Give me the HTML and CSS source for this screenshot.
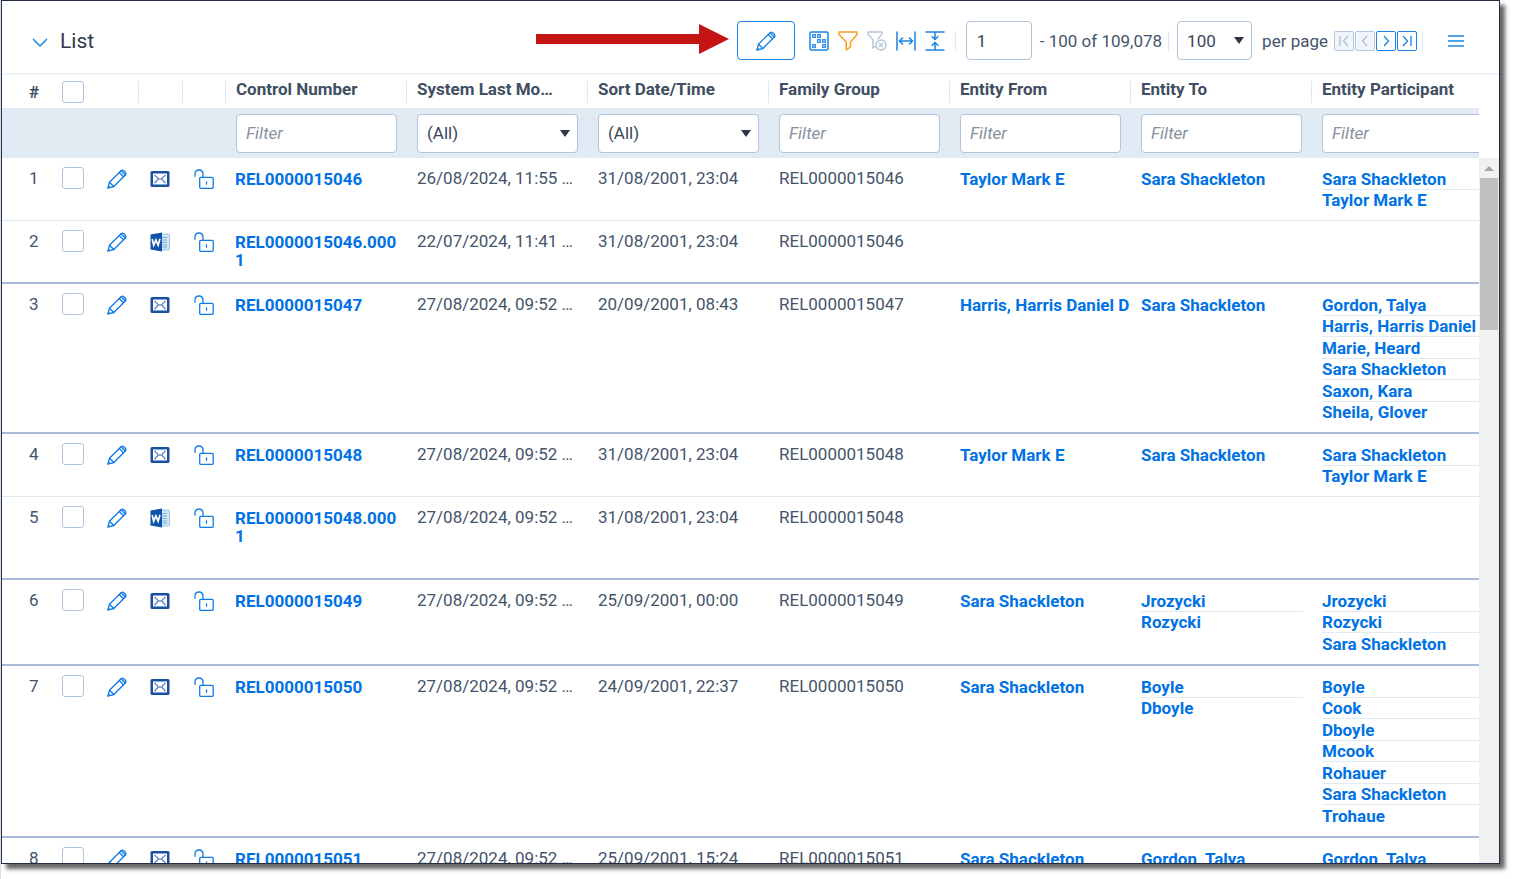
FILE: index.html
```html
<!DOCTYPE html>
<html lang="en">
<head>
  <meta charset="UTF-8" />
  <meta name="viewport" content="width=device-width, initial-scale=1.0"/>
  <title>List</title>
  <link rel="stylesheet" href="styles.css">
</head>
<body>

  <!-- icon sprite -->
  <svg class="sprite" aria-hidden="true">
    <symbol id="i-pencil" viewBox="0 0 20 20">
      <g fill="none" stroke="currentColor" stroke-width="1.3" stroke-linejoin="round" stroke-linecap="round">
        <path d="M.8 19.2 2.5 13.2 14 1.700q1.400-1.200 2.800 0l1.500 1.500q1.200 1.400 0 2.800L6.800 17.500Z"/>
        <path d="M2.500 13.200 6.800 17.500M12.200 3.500l4.300 4.300M14 1.700l4.300 4.300"/>
      </g>
      <path d="M.8 19.200 1.600 16.400 3.600 18.400Z" fill="currentColor"/>
    </symbol>
    <symbol id="i-mail" viewBox="0 0 20 20">
      <rect x=".5" y="2" width="19" height="16" rx="1.5" fill="#1c4f9f"/>
      <rect x="3" y="4.500" width="14" height="11" fill="#fff"/>
      <path d="M4.500 6 9 10.200h2L15.500 6M4.500 14.300l3.500-4M15.500 14.300l-3.500-4" fill="none" stroke="#5f86c1" stroke-width="1.3"/>
    </symbol>
    <symbol id="i-word" viewBox="0 0 20 20">
      <path d="M10 2h8.5q1 0 1 1v14q0 1-1 1H10Z" fill="#d3e5f6" stroke="#9fc3e6" stroke-width="1"/>
      <path d="M12.5 5.5H17M12.5 8H17M12.5 10.500H17M12.500 13H17M12.500 15H17" stroke="#7fb0de" stroke-width="1"/>
      <path d="M.5 2.500 12 .5v19L.5 17.500Z" fill="#0c54a8"/>
      <path d="m2.200 7 1.500 6.300L5.900 8l2.200 5.300L10 6.800" fill="none" stroke="#fff" stroke-width="1.700"/>
    </symbol>
    <symbol id="i-unlock" viewBox="0 0 20 20">
      <g fill="none" stroke="currentColor" stroke-width="1.300" stroke-linecap="round">
        <rect x="5.700" y="8.300" width="13.500" height="11" rx="1"/>
        <path d="M1 7.300V5Q1.200 1 5 1t4 4v3.300M12.500 12.800v2.400"/>
      </g>
    </symbol>
  </svg>

  <main class="panel">
    <header class="toolbar">
      <button class="icon-btn collapse" aria-label="Collapse list">
        <svg viewBox="0 0 16 10"><path d="m1 1 7 7 7-7" fill="none" stroke="currentColor" stroke-width="1.500"/></svg>
      </button>
      <h1 class="title">List</h1>

      <svg class="pointer" viewBox="0 0 193 30" aria-hidden="true"><path d="M0 10h163V0l30 15-30 15V20H0Z" fill="#c41414"/></svg>
      <button class="edit-btn" aria-label="Mass edit"><svg class="icon"><use href="#i-pencil"/></svg></button>

      <div class="tools">
        <button class="icon-btn" aria-label="Columns">
          <svg class="icon" viewBox="0 0 20 20" fill="none" stroke="currentColor" stroke-width="1.200">
            <rect x="1" y="1" width="18" height="18" rx="1.500" stroke-width="1.500"/>
            <rect x="3.700" y="3.700" width="2.600" height="2.600"/><rect x="8.700" y="3.700" width="2.600" height="2.600"/>
            <rect x="8.700" y="8.700" width="2.600" height="2.600"/><rect x="13.700" y="8.700" width="2.600" height="2.600"/>
            <rect x="3.700" y="13.700" width="2.600" height="2.600"/><rect x="13.700" y="13.700" width="2.600" height="2.600"/>
          </svg>
        </button>
        <button class="icon-btn filter-on" aria-label="Toggle filters">
          <svg class="icon" viewBox="0 0 20 20"><path d="M1 1h18v2.500L12.500 11v4.800L8.300 19V11L1 3.500Z" fill="none" stroke="currentColor" stroke-width="1.500" stroke-linejoin="round"/></svg>
        </button>
        <button class="icon-btn off" aria-label="Clear filters" disabled>
          <svg class="icon" viewBox="0 0 20 20" fill="none" stroke="currentColor" stroke-width="1.400" stroke-linejoin="round">
            <path d="M8.500 15.300 6 17V9L1 3V1h14v2l-4.600 5.400"/>
            <circle cx="14" cy="14" r="5"/><path d="m12 12 4 4m0-4-4 4"/>
          </svg>
        </button>
        <button class="icon-btn" aria-label="Fit width">
          <svg class="icon" viewBox="0 0 20 20" fill="none" stroke="currentColor" stroke-width="1.500"><path d="M1 .5v19M19 .5v19M3.500 10h13M7 6.500 3.500 10 7 13.500M13 6.500l3.500 3.500-3.500 3.500"/></svg>
        </button>
        <button class="icon-btn" aria-label="Fit height">
          <svg class="icon" viewBox="0 0 20 20" fill="none" stroke="currentColor" stroke-width="1.500"><path d="M.5 1h19M.5 19h19M10 1v7.500M6.700 5.300 10 8.500l3.300-3.200M10 19v-7.500M6.700 14.700 10 11.500l3.300 3.200"/></svg>
        </button>
      </div>

      <span class="sep"></span>
      <input class="field page-no" type="text" value="1" aria-label="First item">
      <span class="range">- 100 of 109,078</span>
      <span class="sep"></span>
      <div class="select page-size">
        <select class="field" id="pageSize"><option>100</option></select>
      </div>
      <label class="per-page" for="pageSize">per page</label>
      <nav class="pager" aria-label="Pages">
        <button aria-label="First page" disabled><svg viewBox="0 0 18 18"><path d="M5 4v10M13 4 8.500 9l4.500 5"/></svg></button>
        <button aria-label="Previous page" disabled><svg viewBox="0 0 18 18"><path d="M11 4 6.500 9l4.500 5"/></svg></button>
        <button aria-label="Next page"><svg viewBox="0 0 18 18"><path d="m7 4 4.500 5L7 14"/></svg></button>
        <button aria-label="Last page"><svg viewBox="0 0 18 18"><path d="m5 4 4.500 5L5 14M13 4v10"/></svg></button>
      </nav>
      <span class="sep"></span>
      <button class="icon-btn menu" aria-label="Menu">
        <svg viewBox="0 0 16 12"><path d="M0 1h16M0 6h16M0 11h16" stroke="currentColor" stroke-width="1.300"/></svg>
      </button>
    </header>

    <div class="list">
      <div class="table-wrap">
        <table>
          <colgroup>
            <col class="c-num"><col class="c-check"><col class="c-edit"><col class="c-type"><col class="c-lock">
            <col><col><col><col><col><col><col>
          </colgroup>
          <thead>
            <tr class="heads">
              <th class="num">#</th>
              <th class="check"><input type="checkbox" aria-label="Select all"></th>
              <th></th>
              <th><div class="head"></div></th>
              <th><div class="head"></div></th>
              <th><div class="head">Control Number</div></th>
              <th><div class="head">System Last Modified On</div></th>
              <th><div class="head">Sort Date/Time</div></th>
              <th><div class="head">Family Group</div></th>
              <th><div class="head">Entity From</div></th>
              <th><div class="head">Entity To</div></th>
              <th><div class="head">Entity Participant</div></th>
            </tr>
            <tr class="filters">
              <td colspan="5"></td>
              <td><input class="field" type="text" placeholder="Filter" aria-label="Control Number"></td>
              <td><div class="select"><select class="field" aria-label="System Last Modified On"><option>(All)</option></select></div></td>
              <td><div class="select"><select class="field" aria-label="Sort Date/Time"><option>(All)</option></select></div></td>
              <td><input class="field" type="text" placeholder="Filter" aria-label="Family Group"></td>
              <td><input class="field" type="text" placeholder="Filter" aria-label="Entity From"></td>
              <td><input class="field" type="text" placeholder="Filter" aria-label="Entity To"></td>
              <td><input class="field" type="text" placeholder="Filter" aria-label="Entity Participant"></td>
            </tr>
          </thead>
          <tbody>
            <tr>
              <td class="num">1</td>
              <td class="check"><input type="checkbox" aria-label="Select 1"></td>
              <td class="ico"><svg class="icon"><use href="#i-pencil"/></svg></td>
              <td class="ico"><svg class="icon"><use href="#i-mail"/></svg></td>
              <td class="ico"><svg class="icon"><use href="#i-unlock"/></svg></td>
              <td class="ctrl"><a href="#">REL0000015046</a></td>
              <td class="txt">26/08/2024, 11:55 AM</td>
              <td class="txt">31/08/2001, 23:04</td>
              <td class="txt">REL0000015046</td>
              <td><ul><li><a href="#">Taylor Mark E</a></li></ul></td>
              <td><ul><li><a href="#">Sara Shackleton</a></li></ul></td>
              <td><ul><li><a href="#">Sara Shackleton</a></li><li><a href="#">Taylor Mark E</a></li></ul></td>
            </tr>
            <tr class="family-end">
              <td class="num">2</td>
              <td class="check"><input type="checkbox" aria-label="Select 2"></td>
              <td class="ico"><svg class="icon"><use href="#i-pencil"/></svg></td>
              <td class="ico"><svg class="icon"><use href="#i-word"/></svg></td>
              <td class="ico"><svg class="icon"><use href="#i-unlock"/></svg></td>
              <td class="ctrl"><a href="#">REL0000015046.0001</a></td>
              <td class="txt">22/07/2024, 11:41 AM</td>
              <td class="txt">31/08/2001, 23:04</td>
              <td class="txt">REL0000015046</td>
              <td></td>
              <td></td>
              <td></td>
            </tr>
            <tr class="family-end">
              <td class="num">3</td>
              <td class="check"><input type="checkbox" aria-label="Select 3"></td>
              <td class="ico"><svg class="icon"><use href="#i-pencil"/></svg></td>
              <td class="ico"><svg class="icon"><use href="#i-mail"/></svg></td>
              <td class="ico"><svg class="icon"><use href="#i-unlock"/></svg></td>
              <td class="ctrl"><a href="#">REL0000015047</a></td>
              <td class="txt">27/08/2024, 09:52 AM</td>
              <td class="txt">20/09/2001, 08:43</td>
              <td class="txt">REL0000015047</td>
              <td><ul><li><a href="#">Harris, Harris Daniel Daniel</a></li></ul></td>
              <td><ul><li><a href="#">Sara Shackleton</a></li></ul></td>
              <td><ul><li><a href="#">Gordon, Talya</a></li><li><a href="#">Harris, Harris Daniel</a></li><li><a href="#">Marie, Heard</a></li><li><a href="#">Sara Shackleton</a></li><li><a href="#">Saxon, Kara</a></li><li><a href="#">Sheila, Glover</a></li></ul></td>
            </tr>
            <tr>
              <td class="num">4</td>
              <td class="check"><input type="checkbox" aria-label="Select 4"></td>
              <td class="ico"><svg class="icon"><use href="#i-pencil"/></svg></td>
              <td class="ico"><svg class="icon"><use href="#i-mail"/></svg></td>
              <td class="ico"><svg class="icon"><use href="#i-unlock"/></svg></td>
              <td class="ctrl"><a href="#">REL0000015048</a></td>
              <td class="txt">27/08/2024, 09:52 AM</td>
              <td class="txt">31/08/2001, 23:04</td>
              <td class="txt">REL0000015048</td>
              <td><ul><li><a href="#">Taylor Mark E</a></li></ul></td>
              <td><ul><li><a href="#">Sara Shackleton</a></li></ul></td>
              <td><ul><li><a href="#">Sara Shackleton</a></li><li><a href="#">Taylor Mark E</a></li></ul></td>
            </tr>
            <tr class="family-end tall">
              <td class="num">5</td>
              <td class="check"><input type="checkbox" aria-label="Select 5"></td>
              <td class="ico"><svg class="icon"><use href="#i-pencil"/></svg></td>
              <td class="ico"><svg class="icon"><use href="#i-word"/></svg></td>
              <td class="ico"><svg class="icon"><use href="#i-unlock"/></svg></td>
              <td class="ctrl"><a href="#">REL0000015048.0001</a></td>
              <td class="txt">27/08/2024, 09:52 AM</td>
              <td class="txt">31/08/2001, 23:04</td>
              <td class="txt">REL0000015048</td>
              <td></td>
              <td></td>
              <td></td>
            </tr>
            <tr class="family-end">
              <td class="num">6</td>
              <td class="check"><input type="checkbox" aria-label="Select 6"></td>
              <td class="ico"><svg class="icon"><use href="#i-pencil"/></svg></td>
              <td class="ico"><svg class="icon"><use href="#i-mail"/></svg></td>
              <td class="ico"><svg class="icon"><use href="#i-unlock"/></svg></td>
              <td class="ctrl"><a href="#">REL0000015049</a></td>
              <td class="txt">27/08/2024, 09:52 AM</td>
              <td class="txt">25/09/2001, 00:00</td>
              <td class="txt">REL0000015049</td>
              <td><ul><li><a href="#">Sara Shackleton</a></li></ul></td>
              <td><ul><li><a href="#">Jrozycki</a></li><li><a href="#">Rozycki</a></li></ul></td>
              <td><ul><li><a href="#">Jrozycki</a></li><li><a href="#">Rozycki</a></li><li><a href="#">Sara Shackleton</a></li></ul></td>
            </tr>
            <tr class="family-end">
              <td class="num">7</td>
              <td class="check"><input type="checkbox" aria-label="Select 7"></td>
              <td class="ico"><svg class="icon"><use href="#i-pencil"/></svg></td>
              <td class="ico"><svg class="icon"><use href="#i-mail"/></svg></td>
              <td class="ico"><svg class="icon"><use href="#i-unlock"/></svg></td>
              <td class="ctrl"><a href="#">REL0000015050</a></td>
              <td class="txt">27/08/2024, 09:52 AM</td>
              <td class="txt">24/09/2001, 22:37</td>
              <td class="txt">REL0000015050</td>
              <td><ul><li><a href="#">Sara Shackleton</a></li></ul></td>
              <td><ul><li><a href="#">Boyle</a></li><li><a href="#">Dboyle</a></li></ul></td>
              <td><ul><li><a href="#">Boyle</a></li><li><a href="#">Cook</a></li><li><a href="#">Dboyle</a></li><li><a href="#">Mcook</a></li><li><a href="#">Rohauer</a></li><li><a href="#">Sara Shackleton</a></li><li><a href="#">Trohaue</a></li></ul></td>
            </tr>
            <tr>
              <td class="num">8</td>
              <td class="check"><input type="checkbox" aria-label="Select 8"></td>
              <td class="ico"><svg class="icon"><use href="#i-pencil"/></svg></td>
              <td class="ico"><svg class="icon"><use href="#i-mail"/></svg></td>
              <td class="ico"><svg class="icon"><use href="#i-unlock"/></svg></td>
              <td class="ctrl"><a href="#">REL0000015051</a></td>
              <td class="txt">27/08/2024, 09:52 AM</td>
              <td class="txt">25/09/2001, 15:24</td>
              <td class="txt">REL0000015051</td>
              <td><ul><li><a href="#">Sara Shackleton</a></li></ul></td>
              <td><ul><li><a href="#">Gordon, Talya</a></li></ul></td>
              <td><ul><li><a href="#">Gordon, Talya</a></li></ul></td>
            </tr>
          </tbody>
        </table>
      </div>
      <div class="scrollbar" aria-hidden="true">
        <div class="scroll-up"></div>
        <div class="thumb"></div>
      </div>
    </div>
  </main>

</body>
</html>
```
FILE: styles.css
```css
* { box-sizing:border-box; margin:0; padding:0; }

body {
  height:100vh;
  padding:0 15px 15px 0;
  border-left:1px solid #d5deeb;
  background:#fff;
  color:#44546a;
  font:17px/22px Roboto, sans-serif;
  overflow:hidden;
}

button, input, select { font:inherit; color:inherit; }
button { background:none; border:0; cursor:pointer; }
a { color:#0072e5; font-weight:bold; text-decoration:none; }
a:hover { text-decoration:underline; }

.sprite { display:none; }
.icon { display:block; width:20px; height:20px; }

.panel {
  display:flex;
  flex-direction:column;
  height:100%;
  border:1px solid #252d40;
  background:#fff;
  box-shadow:5px 5px 4px rgba(0,0,0,.6);
  overflow:hidden;
}

/* Toolbar */
.toolbar {
  display:flex;
  align-items:center;
  padding:20px 35px 13px 30px;
  border-bottom:2px solid #edf2f8;
  color:#44546a;
}
.icon-btn { color:#1a82e6; flex-shrink:0; }
.icon-btn svg { display:block; }
.collapse svg { width:16px; height:10px; margin-top:4px; }
.title { margin-left:12px; font-size:21px; font-weight:normal; color:#2f3b4c; }
.pointer { width:193px; height:30px; margin:0 8px 4px auto; }
.edit-btn {
  display:flex;
  align-items:center;
  justify-content:center;
  width:58px;
  height:39px;
  border:1px solid #1a82e6;
  border-radius:4px;
  color:#1a82e6;
}
.tools { display:flex; gap:9px; margin:0 10px 0 14px; }
.filter-on { color:#ff9d1e; }
.off { color:#b5c5d9; }
.sep { width:1px; height:20px; background:#dfe7f1; }

.field {
  width:100%;
  height:39px;
  padding:0 9px;
  border:1px solid #b0c4de;
  border-radius:4px;
  background:#fff;
  color:#3a4658;
  appearance:none;
  outline:none;
}
.field::placeholder { color:#8691a1; font-style:italic; opacity:1; }
.select { position:relative; }
.select::after {
  content:'';
  position:absolute;
  right:8px;
  top:16px;
  border:5px solid transparent;
  border-top:7px solid #2c3646;
  border-bottom:0;
  pointer-events:none;
}
.page-no { width:66px; padding:0 10px; margin:0 8px 0 10px; }
.range { white-space:nowrap; margin-right:6px; }
.page-size { width:75px; margin:0 10px 0 8px; }
.per-page { white-space:nowrap; }

.pager { display:flex; gap:1px; margin:0 5px 0 6px; }
.pager button { width:20px; height:20px; border:1px solid #1a82e6; border-radius:2px; color:#1a82e6; }
.pager button:disabled { border-color:#b5c9df; background:#f1f5fa; color:#a9bfd8; }
.pager svg { display:block; width:18px; height:18px; fill:none; stroke:currentColor; stroke-width:1.300; }
.menu { margin-left:25px; }
.menu svg { width:16px; height:12px; }

/* List */
.list { display:flex; flex:1; min-height:0; }
.table-wrap { flex:1; min-width:0; overflow:hidden; }
table { width:100%; min-width:1490px; table-layout:fixed; border-collapse:separate; border-spacing:0; }
.c-num { width:56px; }
.c-check { width:37px; }
.c-edit { width:43px; }
.c-type { width:44px; }
.c-lock { width:43px; }

th { text-align:left; vertical-align:top; color:#3f4e63; padding:6px 0 5px; }
.head {
  height:22px;
  padding:0 28px 0 10px;
  border-left:1px solid #dfe7f1;
  line-height:16px;
  white-space:nowrap;
  overflow:hidden;
  text-overflow:ellipsis;
}

.filters td { height:50px; padding:0 9px 0 11px; background:#e2eaf4; vertical-align:middle; }

tbody td {
  height:63px;
  padding:10px 8px 9px 11px;
  border-bottom:1px solid #dfe8f2;
  vertical-align:top;
  overflow:hidden;
}
.family-end td { border-bottom:2px solid #a8bcd9; }
.tall td { height:83px; }

.num { padding-left:27px; }
tbody .num, tbody .txt { padding-top:9px; }
.txt { white-space:nowrap; text-overflow:ellipsis; }
.check { padding-left:4px; }
tbody .check { padding-top:9px; }
.check input {
  display:block;
  width:22px;
  height:22px;
  border:1px solid #b0c4de;
  border-radius:3px;
  background:#fff;
  appearance:none;
}
tbody .ico { padding:11px 0 0 12px; color:#0f7be6; }
.ctrl { line-height:18px; word-break:break-all; }
tbody .ctrl { padding:12px 8px 9px 10px; }

ul { list-style:none; }
li { height:22px; line-height:22px; white-space:nowrap; border-bottom:1px solid #e2eaf3; }
li:nth-child(even) { height:21px; line-height:21px; }
li:last-child { border-bottom-color:transparent; }

/* Scrollbar */
.scrollbar { width:20px; margin-top:83px; background:#f1f1f1; }
.scroll-up { height:20px; padding:8px 5px; }
.scroll-up::before { content:''; display:block; width:0; border:5px solid transparent; border-top:0; border-bottom-color:#a3a3a3; }
.thumb { height:152px; margin:0 1px; background:#c1c1c1; }
```
